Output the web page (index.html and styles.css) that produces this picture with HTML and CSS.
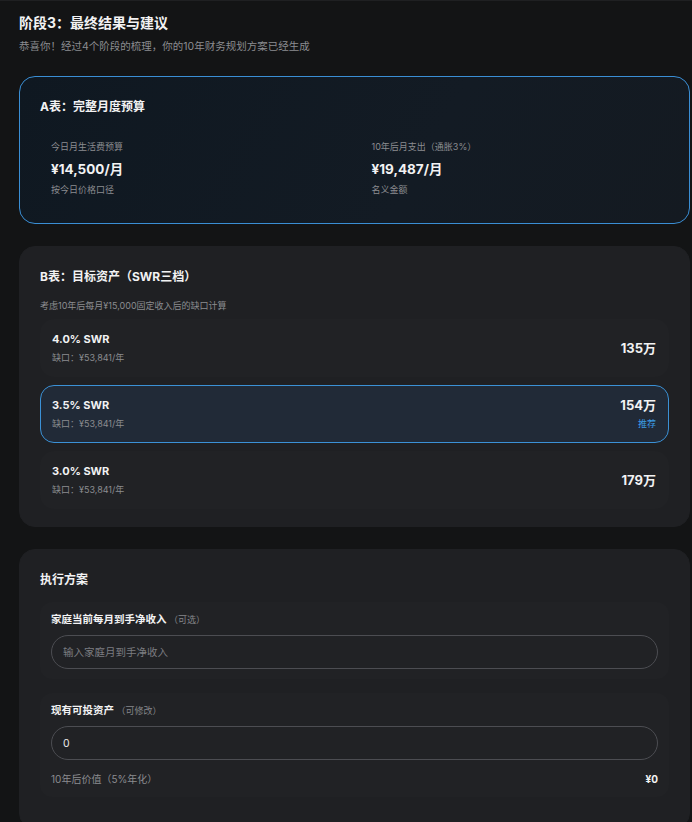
FILE: index.html
```html
<!DOCTYPE html>
<html lang="zh-CN">
<head>
  <meta charset="UTF-8">
  <title>阶段3：最终结果与建议</title>
  <link rel="stylesheet" href="styles.css">
</head>
<body>
  <div class="page">
    <h2 class="stage-title">阶段3：最终结果与建议</h2>
    <p class="stage-sub">恭喜你！经过4个阶段的梳理，你的10年财务规划方案已经生成</p>

    <div class="card card-a">
      <h3 class="card-title">A表：完整月度预算</h3>
      <div class="budget-grid">
        <div class="budget-item">
          <div class="small-label">今日月生活费预算</div>
          <div class="big-value">¥14,500/月</div>
          <div class="small-label note">按今日价格口径</div>
        </div>
        <div class="budget-item">
          <div class="small-label">10年后月支出（通胀3%）</div>
          <div class="big-value">¥19,487/月</div>
          <div class="small-label note">名义金额</div>
        </div>
      </div>
    </div>

    <div class="card">
      <h3 class="card-title">B表：目标资产（SWR三档）</h3>
      <p class="card-sub">考虑10年后每月¥15,000固定收入后的缺口计算</p>
      <div class="swr-list">
        <div class="swr-row">
          <div>
            <div class="swr-name">4.0% SWR</div>
            <div class="small-label">缺口：¥53,841/年</div>
          </div>
          <div class="swr-right">
            <div class="swr-value">135万</div>
          </div>
        </div>
        <div class="swr-row active">
          <div>
            <div class="swr-name">3.5% SWR</div>
            <div class="small-label">缺口：¥53,841/年</div>
          </div>
          <div class="swr-right">
            <div class="swr-value">154万</div>
            <div class="tag">推荐</div>
          </div>
        </div>
        <div class="swr-row">
          <div>
            <div class="swr-name">3.0% SWR</div>
            <div class="small-label">缺口：¥53,841/年</div>
          </div>
          <div class="swr-right">
            <div class="swr-value">179万</div>
          </div>
        </div>
      </div>
    </div>

    <div class="card">
      <h3 class="card-title">执行方案</h3>
      <div class="field-group">
        <label class="field-label" for="income">家庭当前每月到手净收入 <span class="hint">（可选）</span></label>
        <input class="field-input" type="text" id="income" placeholder="输入家庭月到手净收入">
      </div>
      <div class="field-group">
        <label class="field-label" for="assets">现有可投资产 <span class="hint">（可修改）</span></label>
        <input class="field-input" type="text" id="assets" value="0">
        <div class="field-result">
          <span>10年后价值（5%年化）</span>
          <strong>¥0</strong>
        </div>
      </div>
    </div>
  </div>
</body>
</html>
```

FILE: styles.css
```css
html, body {
  margin: 0;
  background: #131415;
}
body {
  font-family: "Inter", "Noto Sans CJK SC", sans-serif;
  color: #f2f2f3;
  border-top: 1px solid #1f2022;
}
.page {
  padding: 12px 2px 0 19px;
}
.stage-title {
  font-size: 14px;
  line-height: 20px;
  font-weight: 700;
  margin: 0 0 6px;
}
.stage-sub {
  font-size: 10.5px;
  line-height: 16px;
  color: #8b8c90;
  margin: 0 0 21px;
}
.card {
  background: #1f2023;
  border: 1px solid #1f2023;
  border-radius: 16px;
  padding: 21px 20px 17px;
  margin-bottom: 22px;
}
.card-a {
  background: linear-gradient(120deg, #0f1821 0%, #131b24 60%, #141a21 100%);
  border-color: #3a8ed4;
  padding-bottom: 18px;
}
.card-title {
  font-size: 12px;
  line-height: 18px;
  font-weight: 700;
  margin: 0 0 13px;
}
.card-sub {
  font-size: 9px;
  line-height: 14px;
  color: #8b8c90;
  margin: 0 0 6px;
}
.budget-grid {
  display: grid;
  grid-template-columns: 1fr 1fr;
  gap: 12px;
}
.budget-item {
  padding: 11px 11px 8px;
}
.small-label {
  font-size: 9px;
  line-height: 14px;
  color: #8b8c90;
}
.big-value {
  font-size: 13.5px;
  line-height: 20px;
  font-weight: 700;
  margin: 5px 0 4px;
}
.swr-list {
  display: flex;
  flex-direction: column;
  gap: 8px;
}
.swr-row {
  display: flex;
  justify-content: space-between;
  align-items: center;
  padding: 11px 12px 11px 11px;
  border: 1px solid transparent;
  border-radius: 14px;
  background: rgba(255,255,255,0.01);
}
.swr-row.active {
  background: #212a37;
  border-color: #3b91d6;
}
.swr-name {
  font-size: 11px;
  line-height: 16px;
  font-weight: 700;
  margin-bottom: 4px;
}
.swr-right {
  display: flex;
  flex-direction: column;
  align-items: flex-end;
  gap: 4px;
}
.swr-value {
  font-size: 13px;
  line-height: 16px;
  font-weight: 700;
}
.tag {
  font-size: 9px;
  line-height: 14px;
  color: #3b9be4;
}
.field-group {
  padding: 10px 11px;
  border-radius: 12px;
  background: rgba(255,255,255,0.01);
  margin-bottom: 14px;
}
.field-label {
  display: block;
  font-size: 10.5px;
  line-height: 16px;
  font-weight: 700;
  margin-bottom: 7px;
}
.hint {
  font-size: 9px;
  font-weight: 400;
  color: #85868a;
}
.field-input {
  display: block;
  box-sizing: border-box;
  width: 100%;
  height: 34px;
  padding: 0 11px;
  border: 1px solid #4c4d52;
  border-radius: 17px;
  background: transparent;
  color: #e8e8e9;
  font-family: inherit;
  font-size: 10.5px;
  outline: none;
}
.field-input::placeholder {
  color: #7c7d81;
}
.field-result {
  display: flex;
  justify-content: space-between;
  font-size: 10px;
  line-height: 16px;
  color: #8b8c90;
  margin-top: 11px;
}
.field-result strong {
  color: #f2f2f3;
}
```
